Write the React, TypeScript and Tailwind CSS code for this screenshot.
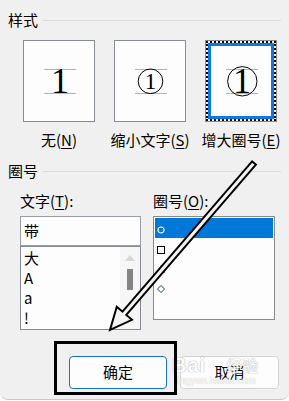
import React from "react";

function Preview({ kind }: { kind: "none" | "small" | "big" }) {
  return (
    <svg className="absolute inset-0" width="72" height="82" viewBox="0 0 72 82">
      <line x1="20" y1="28.5" x2="52" y2="28.5" stroke="#b4b4b4" strokeWidth="1" />
      <line x1="20" y1="52.5" x2="52" y2="52.5" stroke="#b4b4b4" strokeWidth="1" />
      {kind === "small" && <circle cx="35.5" cy="40.3" r="12.3" fill="none" stroke="#000" strokeWidth="1" />}
      {kind === "big" && <circle cx="36.3" cy="40.3" r="14.7" fill="none" stroke="#000" strokeWidth="1" />}
      <text
        x={kind === "small" ? 35.5 : 36}
        y={kind === "small" ? 48 : 52}
        textAnchor="middle"
        fontFamily="'Liberation Serif', serif"
        fontSize={kind === "small" ? 23 : 36}
        fill="#000"
      >
        1
      </text>
    </svg>
  );
}

function SectionHeader({ title }: { title: string }) {
  return (
    <div className="flex items-center h-5 pl-2 pr-2">
      <span className="text-[15px] leading-5">{title}</span>
      <div className="ml-[5px] flex-1 h-px bg-[#dcdcdc]" />
    </div>
  );
}

export default function App() {
  return (
    <div className="relative w-[289px] h-[401px] bg-white overflow-hidden font-['Noto_Sans_CJK_SC',sans-serif] text-black">
      <div className="h-[400px] bg-[#f0f0f0] rounded-b-[8px] border-b border-[#c8c8c8] pt-[10px]">
        <SectionHeader title="样式" />

        <div className="mt-[10px] flex gap-[19px] pl-[23px]">
          <div className="flex flex-col items-center w-[72px]">
            <div className="relative w-[72px] h-[82px] bg-[#fdfdfd] border border-[#868b96]">
              <Preview kind="none" />
            </div>
            <div className="mt-[8px] h-5 text-[15px] leading-5 whitespace-nowrap">
              无(<span className="underline underline-offset-2">N</span>)
            </div>
          </div>
          <div className="flex flex-col items-center w-[72px]">
            <div className="relative w-[72px] h-[82px] bg-[#fdfdfd] border border-[#868b96]">
              <Preview kind="small" />
            </div>
            <div className="mt-[8px] h-5 text-[15px] leading-5 whitespace-nowrap">
              缩小文字(<span className="underline underline-offset-2">S</span>)
            </div>
          </div>
          <div className="flex flex-col items-center w-[72px]">
            <div className="relative w-[72px] h-[82px] border border-[#868b96]">
              <div className="h-full border-2 border-dotted border-black">
                <div className="h-full bg-[#fdfdfd] border-[3px] border-[#0a78e6]" />
              </div>
              <Preview kind="big" />
            </div>
            <div className="mt-[8px] h-5 text-[15px] leading-5 whitespace-nowrap">
              增大圈号(<span className="underline underline-offset-2">E</span>)
            </div>
          </div>
        </div>

        <div className="mt-[11px]">
          <SectionHeader title="圈号" />
        </div>

        <div className="mt-[10px] flex gap-[12px] pl-[20px]">
          <div className="w-[121px] flex flex-col">
            <div className="h-5 text-[15px] leading-5 whitespace-nowrap">
              文字(<span className="underline underline-offset-2">T</span>):
            </div>
            <div className="mt-[5px] h-[30px] bg-[#fdfdfd] border border-[#9a9ea6] pl-[3px] flex items-center text-[15px]">
              带
            </div>
            <div className="h-[84px] bg-[#fdfdfd] border border-[#868b96] flex">
              <div className="flex-1 pl-[3px] pt-px text-[15px]">
                <div className="h-5 leading-5">大</div>
                <div className="h-5 leading-5">A</div>
                <div className="h-5 leading-5">a</div>
                <div className="h-5 leading-5">!</div>
              </div>
              <div className="w-[20px] bg-[#f6f6f6] flex flex-col items-center pt-[8px]">
                <div className="w-0 h-0 border-l-[5px] border-r-[5px] border-b-[6px] border-l-transparent border-r-transparent border-b-[#d8d8d8]" />
                <div className="mt-[8px] w-[6px] h-[21px] bg-[#858585]" />
              </div>
            </div>
          </div>

          <div className="w-[122px] flex flex-col">
            <div className="h-5 text-[15px] leading-5 whitespace-nowrap">
              圈号(<span className="underline underline-offset-2">O</span>):
            </div>
            <div className="mt-[5px] h-[104px] bg-[#fdfdfd] border border-[#8a8a8a] p-px">
              <div className="h-5 bg-[#0078d7] flex items-center pl-[2px] pt-[3px]">
                <svg width="8" height="8" viewBox="0 0 8 8">
                  <circle cx="4" cy="4" r="3" fill="none" stroke="#fff" strokeWidth="1.2" />
                </svg>
              </div>
              <div className="h-5 flex items-center pl-[2px] pt-[3px]">
                <svg width="8" height="8" viewBox="0 0 8 8">
                  <rect x="0.5" y="0.5" width="7" height="7" fill="none" stroke="#000" strokeWidth="1" />
                </svg>
              </div>
              <div className="h-5 flex items-center pl-[2px] pt-[1px]">
                <svg width="8" height="8" viewBox="0 0 8 8">
                  <path d="M4 0.8 L7.5 7.3 L0.5 7.3 Z" fill="none" stroke="#2a2a2a" strokeWidth="1" />
                </svg>
              </div>
              <div className="h-5 flex items-center pl-[2px] pt-[1px]">
                <svg width="8" height="8" viewBox="0 0 8 8">
                  <path d="M4 0.5 L7.5 4 L4 7.5 L0.5 4 Z" fill="none" stroke="#1c3f7a" strokeWidth="1" />
                </svg>
              </div>
            </div>
          </div>
        </div>

        <div className="mt-[26px] flex gap-[13px] pl-[69px]">
          <button className="w-[98px] h-[33px] rounded-[4px] bg-[#fdfdfd] border border-[#1a70d0] text-[15px]">
            确定
          </button>
          <button className="w-[99px] h-[33px] rounded-[4px] bg-[#fdfdfd] border border-[#d4d4d4] text-[15px]">
            取消
          </button>
        </div>
      </div>

      <div className="absolute left-[172px] top-[355px] flex items-end pointer-events-none text-white [text-shadow:0_0_1px_#9a9a9a,0_0_1px_#9a9a9a] opacity-80">
        <span className="font-['Liberation_Sans',sans-serif] font-bold text-[20px] leading-5 tracking-[1px]">Bai</span>
        <span className="ml-[20px] text-[16px] leading-5">经验</span>
      </div>
      <div className="absolute left-[175px] top-[375px] pointer-events-none text-white [text-shadow:0_0_1px_#9a9a9a] opacity-80 font-['Liberation_Sans',sans-serif] text-[10px] leading-3">
        jingyan.baidu.com
      </div>

      <div className="absolute left-[54px] top-[341px] w-[123px] h-[54px] border-[3px] border-black pointer-events-none" />

      <svg className="absolute inset-0 pointer-events-none" width="289" height="401" viewBox="0 0 289 401">
        <polygon
          points="252.1,161.4 122.5,311.7 116.8,306.8 110,330 132,319.8 126.3,314.9 255.9,164.6"
          fill="#f4f4f4"
          stroke="#000"
          strokeWidth="2"
          strokeLinejoin="miter"
        />
      </svg>
    </div>
  );
}
